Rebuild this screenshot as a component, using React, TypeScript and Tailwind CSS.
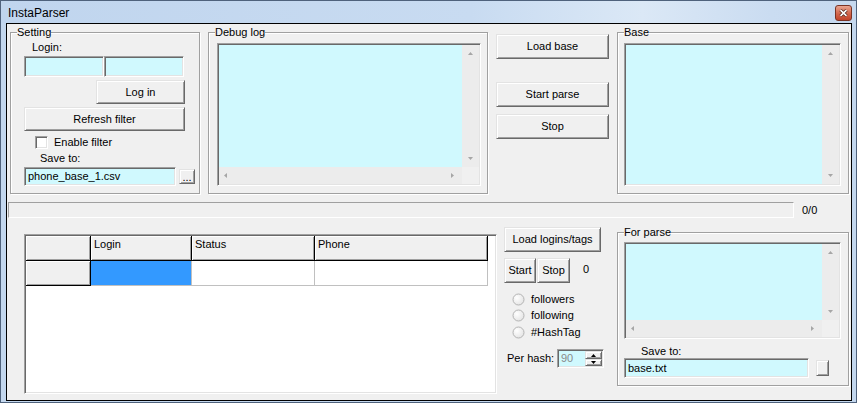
import React from 'react';

// classic win32 edges
const raised =
  'bg-[#f0f0f0] border border-[#696969] border-t-[#e3e3e3] border-l-[#e3e3e3] shadow-[inset_1px_1px_0_#fff,inset_-1px_-1px_0_#a0a0a0]';
const sunken =
  'border border-[#a0a0a0] border-r-white border-b-white shadow-[inset_1px_1px_0_#696969,inset_-1px_-1px_0_#e3e3e3]';

const Arrow = ({ dir, color = '#a6a6a6' }: { dir: 'up' | 'down' | 'left' | 'right'; color?: string }) => {
  const pts = {
    up: '0,3 2.5,0 5,3',
    down: '0,0 2.5,3 5,0',
    left: '3,0 0,2.5 3,5',
    right: '0,0 3,2.5 0,5',
  }[dir];
  const vert = dir === 'up' || dir === 'down';
  return (
    <svg width={vert ? 5 : 3} height={vert ? 3 : 5} className="block">
      <polygon points={pts} fill={color} />
    </svg>
  );
};

const VScroll = () => (
  <div className="w-[17px] bg-[#ececec] flex flex-col items-center justify-between py-[7px]">
    <Arrow dir="up" />
    <Arrow dir="down" />
  </div>
);

const HScroll = () => (
  <div className="flex-1 bg-[#ececec] flex items-center justify-between pl-[5px] pr-[8px]">
    <Arrow dir="left" />
    <Arrow dir="right" />
  </div>
);

function Memo({ className, hscroll = true }: { className: string; hscroll?: boolean }) {
  return (
    <div className={`${sunken} p-[1px] flex flex-col ${className}`}>
      <div className="flex flex-1 min-h-0">
        <div className="flex-1 bg-[#d0f9fe]" />
        <VScroll />
      </div>
      {hscroll && (
        <div className="flex h-[17px]">
          <HScroll />
          <div className="w-[17px] bg-[#f0f0f0]" />
        </div>
      )}
    </div>
  );
}

function Group({ label, className, children }: { label: string; className: string; children?: React.ReactNode }) {
  return (
    <div
      className={`relative border border-[#a0a0a0] shadow-[inset_1px_1px_0_#fff,1px_1px_0_#fff] ${className}`}
    >
      <span className="absolute -top-[7px] left-[6px] bg-[#f0f0f0] leading-[13px]">{label}</span>
      {children}
    </div>
  );
}

function Radio({ label, className }: { label: string; className: string }) {
  return (
    <div className={`flex items-center h-[13px] ${className}`}>
      <svg width="13" height="13" className="block ml-[8px]">
        <defs>
          <radialGradient id="rg" cx="0.35" cy="0.35" r="0.7">
            <stop offset="0" stopColor="#ffffff" />
            <stop offset="1" stopColor="#e4e4e4" />
          </radialGradient>
        </defs>
        <circle cx="6.5" cy="6.5" r="5.5" fill="url(#rg)" stroke="#b4b4b4" />
      </svg>
      <span className="ml-[6px]">{label}</span>
    </div>
  );
}

const cols = [
  { name: '', w: 'w-[65px]' },
  { name: 'Login', w: 'w-[101px]' },
  { name: 'Status', w: 'w-[123px]' },
  { name: 'Phone', w: 'w-[173px]' },
];

const fixedCell =
  'bg-[#f0f0f0] border-r border-b border-black shadow-[inset_1px_1px_0_#fff,inset_-1px_-1px_0_#a0a0a0] h-[25px] pl-[3px] pt-[2px]';

export default function App() {
  return (
    <div className="w-[857px] h-[403px] bg-[#c3d7ee] border border-[#4f627c] flex flex-col font-['Liberation_Sans',Arial,sans-serif] text-[11px] leading-[13px] text-black overflow-hidden">
      {/* Title bar */}
      <div className="h-[22px] flex items-start justify-between bg-[linear-gradient(to_right,#c0d5ee,#c8dbf1_55%,#dbe8f6_75%,#cadcf1_90%,#c6d9ef)]">
        <span className="mt-[5px] ml-[7px] text-[12px] leading-[15px]">InstaParser</span>
        <div className="mt-[4px] mr-[4px] w-[17px] h-[16px] rounded-[3px] border border-[#7a3324] bg-[linear-gradient(#e9a591,#d46a50_50%,#c2432a)] flex items-center justify-center">
          <svg width="9" height="8" viewBox="0 0 9 8" className="block">
            <path d="M1.5 1.2 L7.5 6.8 M7.5 1.2 L1.5 6.8" stroke="#4a2018" strokeWidth="3.2" />
            <path d="M1.5 1.2 L7.5 6.8 M7.5 1.2 L1.5 6.8" stroke="#fff" strokeWidth="1.7" />
          </svg>
        </div>
      </div>

      {/* Client area */}
      <div className="flex-1 ml-[5px] mr-[4px] mb-[1px] border border-black bg-[#f0f0f0] flex flex-col">
        {/* Top row */}
        <div className="flex items-start mt-[8px] ml-[3px]">
          <Group label="Setting" className="w-[190px] h-[162px]">
            <div className="flex flex-col items-start">
              <div className="ml-[21px] mt-[8px]">Login:</div>
              <div className="flex ml-[13px] mt-[2px]">
                <div className={`${sunken} w-[80px] h-[21px] bg-[#d0f9fe]`} />
                <div className={`${sunken} w-[80px] h-[21px] bg-[#d0f9fe]`} />
              </div>
              <button type="button" className={`${raised} ml-[85px] mt-[3px] w-[89px] h-[24px] flex items-center justify-center`}>
                Log in
              </button>
              <button type="button" className={`${raised} ml-[13px] mt-[3px] w-[161px] h-[24px] flex items-center justify-center`}>
                Refresh filter
              </button>
              <div className="flex items-center ml-[24px] mt-[5px] h-[13px]">
                <div className={`${sunken} w-[13px] h-[13px] bg-white`} />
                <span className="ml-[6px]">Enable filter</span>
              </div>
              <div className="ml-[29px] mt-[3px]">Save to:</div>
              <div className="flex items-start ml-[13px] mt-[2px]">
                <div className={`${sunken} w-[152px] h-[19px] bg-[#d0f9fe] pl-[3px] leading-[17px]`}>phone_base_1.csv</div>
                <button type="button" className={`${raised} ml-[3px] mt-[2px] w-[16px] h-[15px] flex items-end justify-center leading-[11px]`}>
                  ...
                </button>
              </div>
            </div>
          </Group>

          <Group label="Debug log" className="ml-[8px] w-[280px] h-[162px]">
            <Memo className="ml-[8px] mt-[10px] w-[264px] h-[143px]" />
          </Group>

          <div className="ml-[8px] w-[113px] flex flex-col">
            <button type="button" className={`${raised} mt-[2px] h-[25px] flex items-center justify-center`}>
              Load base
            </button>
            <button type="button" className={`${raised} mt-[23px] h-[25px] flex items-center justify-center`}>
              Start parse
            </button>
            <button type="button" className={`${raised} mt-[7px] h-[25px] flex items-center justify-center`}>
              Stop
            </button>
          </div>

          <Group label="Base" className="ml-[8px] w-[232px] h-[162px]">
            <Memo className="ml-[6px] mt-[10px] w-[217px] h-[143px]" hscroll={false} />
          </Group>
        </div>

        {/* Progress */}
        <div className="flex items-center mt-[8px] ml-[1px] h-[16px]">
          <div className="w-[786px] h-[16px] border border-[#a0a0a0] border-r-white border-b-white bg-[#f0f0f0]" />
          <span className="ml-[8px]">0/0</span>
        </div>

        {/* Bottom section */}
        <div className="flex items-start">
          {/* Grid */}
          <div className={`${sunken} ml-[17px] mt-[16px] w-[473px] h-[160px] bg-white p-[1px]`}>
            <div className="flex">
              {cols.map((c) => (
                <div key={c.w} className={`${fixedCell} ${c.w}`}>
                  {c.name}
                </div>
              ))}
            </div>
            <div className="flex">
              <div className={`${fixedCell} w-[65px]`} />
              <div className="w-[101px] h-[25px] bg-[#3399ff] border-r border-b border-[#c0c0c0]" />
              <div className="w-[123px] h-[25px] bg-white border-r border-b border-[#c0c0c0]" />
              <div className="w-[173px] h-[25px] bg-white border-r border-b border-[#c0c0c0]" />
            </div>
          </div>

          {/* Middle controls */}
          <div className="ml-[7px] mt-[9px] w-[105px] flex flex-col items-start">
            <button type="button" className={`${raised} w-[97px] h-[25px] flex items-center justify-center`}>
              Load logins/tags
            </button>
            <div className="flex items-start mt-[6px]">
              <button type="button" className={`${raised} w-[32px] h-[25px] flex items-center justify-center`}>
                Start
              </button>
              <button type="button" className={`${raised} ml-[1px] w-[33px] h-[25px] flex items-center justify-center`}>
                Stop
              </button>
              <span className="ml-[13px] mt-[5px]">0</span>
            </div>
            <Radio label="followers" className="mt-[10px]" />
            <Radio label="following" className="mt-[3px]" />
            <Radio label="#HashTag" className="mt-[4px]" />
            <div className="flex items-center mt-[10px]">
              <span className="ml-[3px] w-[50px]">Per hash:</span>
              <div className={`${sunken} w-[47px] h-[19px] p-[1px] flex bg-[#d0f9fe]`}>
                <span className="flex-1 pl-[2px] leading-[15px] text-[#8a8a8a]">90</span>
                <div className="w-[17px] flex flex-col">
                  <div className={`${raised} h-[8px] flex items-center justify-center`}>
                    <Arrow dir="up" color="#000" />
                  </div>
                  <div className={`${raised} h-[7px] flex items-center justify-center`}>
                    <Arrow dir="down" color="#000" />
                  </div>
                </div>
              </div>
            </div>
          </div>

          {/* For parse */}
          <Group label="For parse" className="ml-[8px] mt-[14px] w-[232px] h-[154px]">
            <div className="flex flex-col items-start">
              <Memo className="ml-[6px] mt-[9px] w-[217px] h-[97px]" />
              <div className="ml-[23px] mt-[6px]">Save to:</div>
              <div className="flex items-start">
                <div className={`${sunken} ml-[6px] w-[185px] h-[20px] bg-[#d0f9fe] pl-[3px] leading-[18px]`}>base.txt</div>
                <button type="button" className={`${raised} ml-[7px] mt-[2px] w-[13px] h-[16px]`} />
              </div>
            </div>
          </Group>
        </div>
      </div>
    </div>
  );
}
